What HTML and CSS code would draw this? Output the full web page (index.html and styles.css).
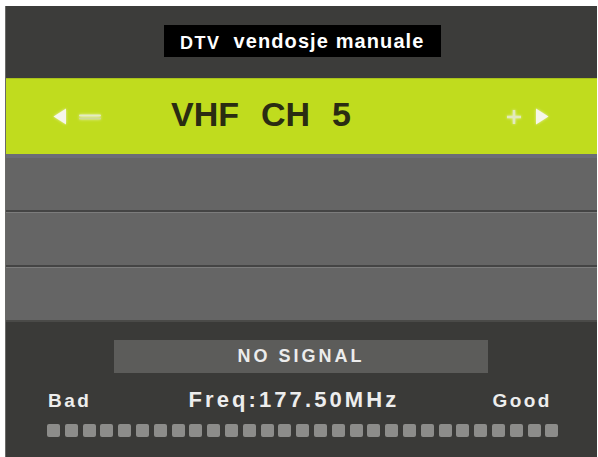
FILE: index.html
```html
<!DOCTYPE html>
<html>
<head>
<meta charset="utf-8">
<link rel="stylesheet" href="styles.css">
</head>
<body>
<div class="panel">
  <div class="header">
    <div class="title"><span class="dtv">DTV</span><span class="ttl">vendosje manuale</span></div>
  </div>
  <div class="chan">
    <div class="ctl">
      <svg class="tri" width="14" height="17" viewBox="0 0 14 17"><polygon points="13,0.5 13,16.5 0.5,8.5" fill="#f6f6ea"/></svg>
      <svg class="minus" width="22" height="8" viewBox="0 0 22 8"><rect x="0" y="1.5" width="22" height="2" rx="1" fill="#e4ebc4"/><rect x="0" y="4.5" width="22" height="2" rx="1" fill="#cfd99a"/></svg>
    </div>
    <div class="chtext"><span>VHF</span><span>CH</span><span>5</span></div>
    <div class="ctl ctl-r">
      <svg class="plus" width="14" height="16" viewBox="0 0 14 16"><rect x="5.75" y="1" width="2.5" height="14" fill="#e2e9bf"/><rect x="0" y="6.75" width="14" height="2.5" fill="#e2e9bf"/></svg>
      <svg class="tri" width="14" height="17" viewBox="0 0 14 17"><polygon points="1,0.5 1,16.5 13.5,8.5" fill="#f6f6ea"/></svg>
    </div>
  </div>
  <div class="edge"></div>
  <div class="row"></div>
  <div class="sep"></div>
  <div class="row"></div>
  <div class="sep"></div>
  <div class="row"></div>
  <div class="bottom">
    <div class="nosig">NO SIGNAL</div>
    <div class="labels">
      <span class="lbl">Bad</span>
      <span class="freq">Freq:177.50MHz</span>
      <span class="lbl">Good</span>
    </div>
    <div class="dots">
      <i></i><i></i><i></i><i></i><i></i><i></i><i></i><i></i><i></i><i></i>
      <i></i><i></i><i></i><i></i><i></i><i></i><i></i><i></i><i></i><i></i>
      <i></i><i></i><i></i><i></i><i></i><i></i><i></i><i></i><i></i>
    </div>
  </div>
</div>
</body>
</html>
```

FILE: styles.css
```css
html, body {
  margin: 0;
  padding: 0;
  background: #ffffff;
}
body {
  font-family: "Liberation Sans", Arial, sans-serif;
  width: 598px;
  height: 457px;
  overflow: hidden;
}
.panel {
  margin: 6px 0 0 5px;
  width: 592px;
  height: 451px;
  background: #3b3b39;
  display: flex;
  flex-direction: column;
  border-left: 1px solid #6a6a68;
  box-sizing: border-box;
}
.header {
  height: 72px;
  display: flex;
  justify-content: center;
  align-items: flex-start;
  background: #3c3c3a;
}
.title {
  margin-top: 19px;
  margin-left: 2px;
  width: 277px;
  height: 32px;
  box-sizing: border-box;
  padding-left: 16px;
  background: #000;
  color: #fff;
  display: flex;
  align-items: baseline;
  line-height: 32px;
  font-weight: bold;
}
.dtv {
  font-size: 18px;
  letter-spacing: 1.5px;
  margin-right: 13px;
  position: relative;
  top: 1px;
}
.ttl {
  font-size: 20px;
  letter-spacing: 1.1px;
}
.chan {
  height: 76px;
  background: #c0dc1e;
  display: flex;
  align-items: center;
  box-sizing: border-box;
  border-top: 1px solid #a9c21a;
}
.ctl {
  display: flex;
  align-items: center;
  gap: 12px;
  margin-left: 47px;
  filter: drop-shadow(0 0 1.5px rgba(255,255,255,0.6));
}
.ctl-r {
  margin-left: auto;
  margin-right: 48px;
  gap: 14px;
}
.chtext {
  margin-left: 70px;
  margin-bottom: 5px;
  font-size: 34px;
  font-weight: bold;
  color: #2a2c12;
  display: flex;
  gap: 22px;
}
.edge {
  height: 4px;
  background: #6b6d76;
}
.row {
  height: 52px;
  background: #656565;
}
.sep {
  height: 3px;
  background: linear-gradient(#444444 0, #444444 2px, #7c7c7c 2px);
}
.bottom {
  flex: 1;
  background: #3a3a38;
  border-top: 2px solid #4a4a48;
  display: flex;
  flex-direction: column;
}
.nosig {
  margin: 18px 0 0 108px;
  width: 374px;
  height: 33px;
  background: #5c5c5a;
  color: #ececec;
  font-weight: bold;
  font-size: 18px;
  letter-spacing: 3px;
  line-height: 33px;
  text-align: center;
}
.labels {
  margin-top: 14px;
  padding: 0 45px 0 42px;
  display: flex;
  justify-content: space-between;
  align-items: baseline;
  color: #ededed;
  font-weight: bold;
}
.lbl {
  font-size: 19px;
  letter-spacing: 2.5px;
}
.freq {
  font-size: 22px;
  letter-spacing: 3.1px;
  margin-left: 4px;
}
.dots {
  margin-top: 11px;
  padding-left: 41px;
  display: flex;
  gap: 4.8px;
}
.dots i {
  display: block;
  width: 13px;
  height: 13px;
  background: #8c8c8a;
  border-radius: 2px;
  filter: blur(0.6px);
}
```
